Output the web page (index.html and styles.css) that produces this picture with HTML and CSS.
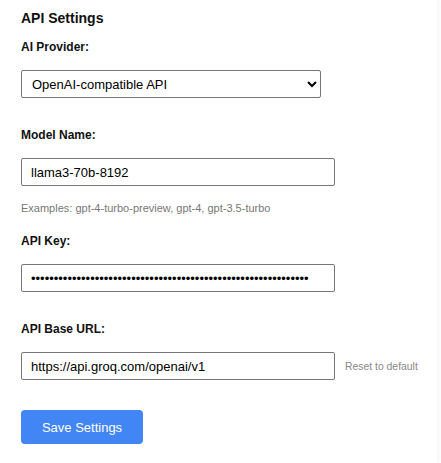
FILE: index.html
```html
<!DOCTYPE html>
<html>
<head>
<meta charset="utf-8">
<link rel="stylesheet" href="styles.css">
</head>
<body>
<div class="panel">
  <h2 class="title">API Settings</h2>
  <div class="group">
    <label class="label">AI Provider:</label>
    <select class="select">
      <option>OpenAI-compatible API</option>
    </select>
  </div>
  <div class="group">
    <label class="label">Model Name:</label>
    <input class="input" type="text" value="llama3-70b-8192">
    <div class="hint">Examples: gpt-4-turbo-preview, gpt-4, gpt-3.5-turbo</div>
  </div>
  <div class="group">
    <label class="label">API Key:</label>
    <input class="input" type="password" value="gsk_abcdefghijklmnopqrstuvwxyz0123456789ABCDEFGHIJKLMNOPQRSTU">
  </div>
  <div class="group">
    <label class="label">API Base URL:</label>
    <div class="row">
      <input class="input" type="text" value="https://api.groq.com/openai/v1">
      <span class="reset">Reset to default</span>
    </div>
  </div>
  <button class="save">Save Settings</button>
</div>
</body>
</html>
```
FILE: styles.css
```css
html, body {
  margin: 0;
  padding: 0;
  background: #fff;
}
body {
  font-family: "Liberation Sans", Arial, sans-serif;
  color: #000;
}
.panel {
  width: 437px;
  height: 463px;
  box-sizing: border-box;
  padding: 10px 0 0 21px;
  box-shadow: 2px 0 4px rgba(0,0,0,0.04);
  display: flex;
  flex-direction: column;
  align-items: flex-start;
}
.title {
  margin: 0 0 14px 0;
  font-size: 14px;
  line-height: 16px;
  font-weight: bold;
  color: #111;
}
.group {
  display: flex;
  flex-direction: column;
  align-items: flex-start;
  margin-bottom: 30px;
}
.label {
  display: block;
  font-size: 12px;
  line-height: 14px;
  font-weight: bold;
  margin-bottom: 16px;
  color: #111;
}
.select {
  width: 300px;
  height: 28px;
  box-sizing: border-box;
  font-family: "Liberation Sans", Arial, sans-serif;
  font-size: 13px;
  color: #000;
  border: 1px solid #767676;
  border-radius: 2px;
  background: #fff;
  padding: 0 6px;
  margin: 0;
}
.input {
  width: 314px;
  height: 28px;
  box-sizing: border-box;
  font-family: "Liberation Sans", Arial, sans-serif;
  font-size: 13px;
  color: #000;
  border: 1px solid #767676;
  border-radius: 2px;
  padding: 0 9px;
  margin: 0;
  outline: none;
}
.hint {
  margin-top: 16px;
  margin-bottom: -11px;
  font-size: 11px;
  line-height: 13px;
  color: #777;
}
.row {
  display: flex;
  align-items: center;
  gap: 10px;
}
.reset {
  font-size: 10.4px;
  color: #888;
}
.save {
  margin-top: 0;
  width: 122px;
  height: 34px;
  border: none;
  border-radius: 4px;
  background: #4285f4;
  color: #fff;
  font-family: "Liberation Sans", Arial, sans-serif;
  font-size: 13px;
  padding: 0;
}
```
